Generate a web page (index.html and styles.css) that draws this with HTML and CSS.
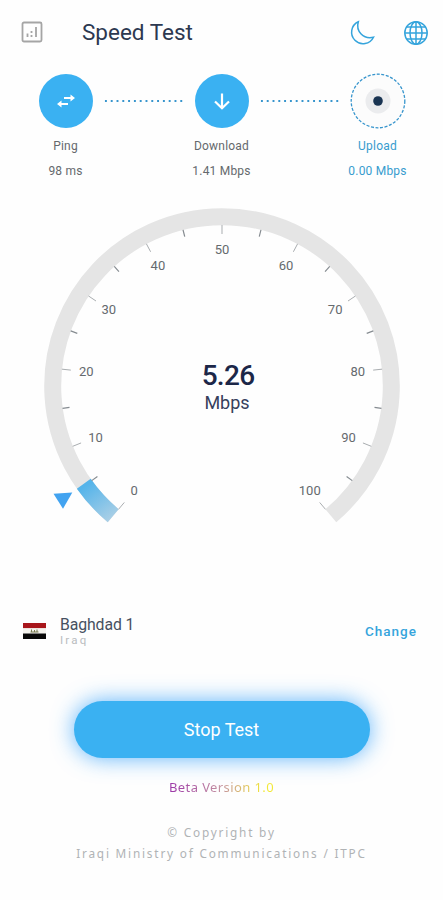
FILE: index.html
```html
<!DOCTYPE html>
<html lang="en">
<head>
  <meta charset="UTF-8">
  <meta name="viewport" content="width=device-width, initial-scale=1.0">
  <title>Speed Test</title>
  <link rel="stylesheet" href="styles.css">
</head>
<body>

  <header class="top-bar">
    <svg class="stats-icon" width="22" height="22" viewBox="0 0 22 22">
      <rect x="1.5" y="1.5" width="19" height="19" rx="1.5"/>
      <path d="M6.5 12.5V16M10.5 14V16M10.5 10V12M15 6V16"/>
    </svg>
    <h1>Speed Test</h1>
    <svg class="line-icon" width="26" height="26" viewBox="0 0 26 26">
      <path d="M9.3 1.8A11.5 11.5 0 1 0 24.5 17.2C14.5 19.5 6.5 11.5 9.3 1.8Z"/>
    </svg>
    <svg class="line-icon globe" width="26" height="26" viewBox="0 0 26 26">
      <circle cx="13" cy="13" r="11.2"/>
      <ellipse cx="13" cy="13" rx="6" ry="11.2"/>
      <path d="M13 1.8V24.2M1.8 13H24.2M3.6 7H22.4M3.6 19H22.4"/>
    </svg>
  </header>

  <section class="steps">
    <div class="step">
      <div class="circle">
        <svg width="20" height="16" viewBox="0 0 20 16">
          <path class="stroke" d="M8 5H15M5 11H12"/>
          <path class="fill" d="M14.5 1.5L19 5L14.5 8.5ZM5.5 7.5L1 11L5.5 14.5Z"/>
        </svg>
      </div>
      <p>Ping</p>
      <p>98 ms</p>
    </div>
    <div class="dots"></div>
    <div class="step">
      <div class="circle">
        <svg width="20" height="20" viewBox="0 0 20 20">
          <path class="stroke" d="M10 2.5V17M3 10.5L10 17.2L17 10.5"/>
        </svg>
      </div>
      <p>Download</p>
      <p>1.41 Mbps</p>
    </div>
    <div class="dots"></div>
    <div class="step active">
      <svg width="56" height="56" viewBox="0 0 56 56">
        <circle class="ring" cx="28" cy="28" r="26.8"/>
        <circle class="halo" cx="28" cy="28" r="12.5"/>
        <circle class="dot" cx="28" cy="28" r="4.8"/>
      </svg>
      <p>Upload</p>
      <p>0.00 Mbps</p>
    </div>
  </section>

  <svg class="gauge" width="443" height="340" viewBox="0 0 443 340">
    <defs>
      <linearGradient id="progress" gradientUnits="userSpaceOnUse" x1="112" y1="318" x2="88" y2="284">
        <stop offset="0" stop-color="#a9cfe6"/>
        <stop offset="1" stop-color="#55b4ea"/>
      </linearGradient>
    </defs>
    <path id="track"/>
    <path id="value"/>
    <g id="ticks"></g>
    <path class="pointer" d="M53.5 293.8L72.3 292.6L63 308.8Z"/>
    <text class="speed" x="228" y="185">5.26</text>
    <text class="unit" x="227" y="208.5">Mbps</text>
  </svg>

  <section class="server">
    <svg class="flag" width="23" height="16" viewBox="0 0 23 16">
      <rect width="23" height="5.3" fill="#a8161b"/>
      <rect y="5.3" width="23" height="5.2" fill="#f4f3ed"/>
      <rect y="10.5" width="23" height="5.5" fill="#080808"/>
      <path d="M7.5 9H15.5M8.5 6.5V9M11.5 7V9M14 6.5V9" stroke="#77794f" stroke-width="1"/>
    </svg>
    <div class="place">
      <div class="city">Baghdad 1</div>
      <div class="country">Iraq</div>
    </div>
    <a class="change">Change</a>
  </section>

  <button class="stop" type="button">Stop Test</button>

  <footer>
    <div class="version">Beta Version 1.0</div>
    <div class="copyright">
      <div class="owner">© Copyright by</div>
      <div class="ministry">Iraqi Ministry of Communications / ITPC</div>
    </div>
  </footer>

  <script>
    const CX = 222, CY = 186, SPEED = 5.26;

    // Point on the dial for a speed between 0 and 100
    function point(speed, radius) {
      const angle = (130 + speed * 2.8) * Math.PI / 180;
      return [(CX + radius * Math.cos(angle)).toFixed(2), (CY + radius * Math.sin(angle)).toFixed(2)];
    }

    function arc(to) {
      const large = to * 2.8 > 180 ? 1 : 0;
      return `M${point(0, 169.3)} A169.3 169.3 0 ${large} 1 ${point(to, 169.3)}`;
    }

    document.getElementById('track').setAttribute('d', arc(100));
    document.getElementById('value').setAttribute('d', arc(SPEED));

    // Ticks and numbers
    let html = '';
    for (let s = 0; s <= 100; s += 5) {
      const major = s % 10 === 0;
      const [x1, y1] = point(s, 161);
      const [x2, y2] = point(s, major ? 152 : 154);
      html += `<line class="${major ? 'major' : 'minor'}" x1="${x1}" y1="${y1}" x2="${x2}" y2="${y2}"/>`;
      if (major) {
        const [x, y] = point(s, 136.5);
        html += `<text x="${x}" y="${Number(y) + 4.6}">${s}</text>`;
      }
    }
    document.getElementById('ticks').innerHTML = html;
  </script>

</body>
</html>
```
FILE: styles.css
```css
body {
  font-family: Roboto, Arial, sans-serif;
  background-color: #fefefe;
  color: #2c3850;
  margin: 0;
  height: 900px;
  overflow: hidden;
}

p, h1 {
  margin: 0;
  font-weight: 400;
}

svg {
  display: block;
  flex: none;
}

/* Header */
.top-bar {
  display: flex;
  align-items: center;
  height: 65px;
  padding: 0 14px 0 21px;
}

.stats-icon {
  fill: none;
  stroke: #a5a5a5;
  stroke-width: 1.8;
  margin-top: -2px;
}

.top-bar h1 {
  font-size: 22.5px;
  margin: -2px auto 0 39px;
}

.line-icon {
  fill: none;
  stroke: #35a4dc;
  stroke-width: 1.5;
}

.globe {
  margin-left: 28px;
}

/* Test steps */
.steps {
  display: flex;
  justify-content: center;
  height: 127px;
  padding-top: 8px;
}

.step {
  display: flex;
  flex-direction: column;
  align-items: center;
  width: 75px;
  font-size: 12px;
  letter-spacing: 0.2px;
  line-height: 25px;
  color: #65696d;
  white-space: nowrap;
}

.circle {
  display: flex;
  align-items: center;
  justify-content: center;
  width: 54px;
  height: 54px;
  margin: 1px 0 6px;
  border-radius: 50%;
  background-color: #3ab1f2;
}

.circle .stroke {
  fill: none;
  stroke: #fff;
  stroke-width: 2.2;
}

.circle .fill {
  fill: #fff;
}

.active {
  color: #379cce;
}

.active svg {
  margin-bottom: 5px;
}

.ring {
  fill: #fcfcfc;
  stroke: #3795cd;
  stroke-width: 1.3;
  stroke-dasharray: 3 1.6;
}

.halo {
  fill: #ebecee;
}

.dot {
  fill: #193452;
}

.dots {
  width: 81px;
  height: 2px;
  margin: 27px 0 0;
  background: radial-gradient(circle, #3795cd 1px, transparent 1.3px) 0 0 / 5.8px 2px;
}

/* Gauge */
#track, #value {
  fill: none;
  stroke: #e5e5e5;
  stroke-width: 17;
}

#value {
  stroke: url(#progress);
}

#ticks line {
  stroke: #a9adb0;
  stroke-width: 1;
}

#ticks .minor {
  stroke: #858b90;
  stroke-width: 1.2;
}

.gauge text {
  font-size: 13px;
  fill: #656a6e;
  text-anchor: middle;
}

.gauge .speed {
  font-size: 28px;
  font-weight: 500;
  letter-spacing: -0.7px;
  fill: #1c2748;
}

.gauge .unit {
  font-size: 18px;
  fill: #36405c;
}

.pointer {
  fill: #42a3f0;
}

/* Server */
.server {
  display: flex;
  align-items: center;
  height: 40px;
  margin-top: 71px;
  padding: 0 26px 0 23px;
}

.place {
  flex: 1;
  margin-left: 14px;
}

.city {
  font-size: 15.8px;
  letter-spacing: -0.1px;
  line-height: 17px;
  color: #465060;
}

.country {
  font-size: 11.5px;
  line-height: 14px;
  letter-spacing: 2.2px;
  color: #b9bcbe;
}

.change {
  font-size: 13.5px;
  font-weight: 500;
  letter-spacing: 1px;
  color: #35a4dc;
}

.stop {
  display: block;
  width: 296px;
  height: 57px;
  margin: 50px auto 0;
  padding: 0;
  border: none;
  border-radius: 29px;
  background-color: #3ab1f2;
  box-shadow: 0 0 22px rgba(40, 155, 250, 0.75);
  color: #fff;
  font-family: inherit;
  font-size: 18px;
}

/* Footer */
footer {
  display: flex;
  flex-direction: column;
  align-items: center;
  padding-top: 19px;
  line-height: 20px;
  white-space: nowrap;
}

.version {
  font-family: "Noto Sans", sans-serif;
  font-size: 13px;
  letter-spacing: 0.4px;
  background: linear-gradient(90deg, #9b35a8, #c492a0 50%, #f2e836 90%);
  -webkit-background-clip: text;
  background-clip: text;
  color: transparent;
}

.copyright {
  margin-top: 25px;
  font-family: "Noto Sans", sans-serif;
  font-size: 11.8px;
  letter-spacing: 1.8px;
  line-height: 20.5px;
  text-align: center;
  color: #b0b3b5;
}
```
